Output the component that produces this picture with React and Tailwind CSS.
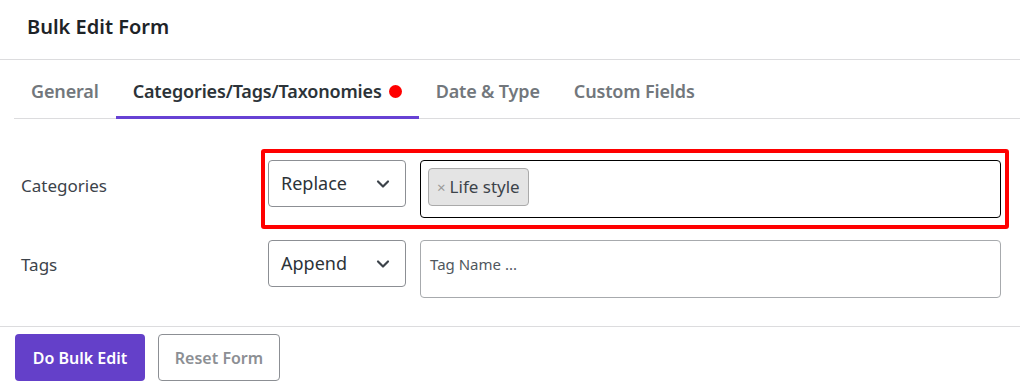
import { ChevronDown } from "lucide-react";

const tabs = [
  { name: "General" },
  { name: "Categories/Tags/Taxonomies", active: true, dot: true },
  { name: "Date & Type" },
  { name: "Custom Fields" },
];

const Select = ({ value }) => (
  <div className="flex h-[47px] w-[138px] shrink-0 items-center justify-between rounded-[4px] border border-[#8c8f94] bg-white pl-3 pr-[12px] text-[18px] text-[#2c3338]">
    <span>{value}</span>
    <ChevronDown size={20} strokeWidth={2.6} className="text-[#3c434a]" />
  </div>
);

const App = () => {
  return (
    <div
      className="h-[387px] w-[1020px] overflow-hidden bg-white text-[#1d2327]"
      style={{ fontFamily: '"Noto Sans", "Open Sans", sans-serif' }}
    >
      {/* Header */}
      <div className="flex h-[60px] items-center border-b border-[#dcdcde] pb-[6px] pl-[27px]">
        <h1 className="text-[20px] font-semibold text-[#1d2327]">Bulk Edit Form</h1>
      </div>

      {/* Tabs */}
      <div className="ml-[14px] flex h-[59px] items-stretch border-b border-[#dcdcde]">
        {tabs.map((tab) => (
          <div
            key={tab.name}
            className={
              "-mb-px flex items-center gap-[7px] border-b-[3px] px-[17px] pt-[7px] text-[18px] font-semibold tracking-[-0.15px] " +
              (tab.active
                ? "border-[#6741d4] text-[#2c3338]"
                : "border-transparent text-[#72777c]")
            }
          >
            <span>{tab.name}</span>
            {tab.dot && <span className="h-[13px] w-[13px] rounded-full bg-[#ff0000]" />}
          </div>
        ))}
      </div>

      {/* Rows */}
      <div className="flex flex-col gap-[22px] pt-[41px] pb-[28px]">
        <div className="relative flex items-start">
          <div className="w-[268px] shrink-0 pl-[21px] pt-[13px] text-[17px] text-[#3c434a]">Categories</div>
          <Select value="Replace" />
          <div className="ml-[14px] flex h-[58px] w-[581px] items-start rounded-[4px] border border-black bg-white p-[7px]">
            <span className="flex h-[38px] items-center gap-[4px] rounded-[4px] border border-[#aaaaaa] bg-[#e4e4e4] px-[8px] text-[17px] text-[#3c434a]">
              <span className="text-[15px] text-[#999999]">×</span>
              Life style
            </span>
          </div>
          <div className="pointer-events-none absolute left-[261px] top-[-11px] h-[80px] w-[748px] rounded-[3px] border-[4px] border-[#ff0000]" />
        </div>

        <div className="flex items-start">
          <div className="w-[268px] shrink-0 pl-[21px] pt-[12px] text-[17px] text-[#3c434a]">Tags</div>
          <Select value="Append" />
          <div className="ml-[14px] h-[58px] w-[581px] rounded-[4px] border border-[#a7aaad] bg-white px-[9px] pt-[12px] text-[15px] text-[#50575e]">
            Tag Name ...
          </div>
        </div>
      </div>

      {/* Footer */}
      <div className="flex gap-[13px] border-t border-[#dcdcde] pl-[15px] pt-[7px]">
        <button className="h-[47px] w-[130px] rounded-[4px] bg-[#6440c9] text-[16px] font-semibold text-white">
          Do Bulk Edit
        </button>
        <button className="h-[47px] w-[122px] rounded-[4px] border border-[#8c8f94] bg-white text-[16px] font-semibold text-[#8c8f94]">
          Reset Form
        </button>
      </div>
    </div>
  );
};

export default App;
